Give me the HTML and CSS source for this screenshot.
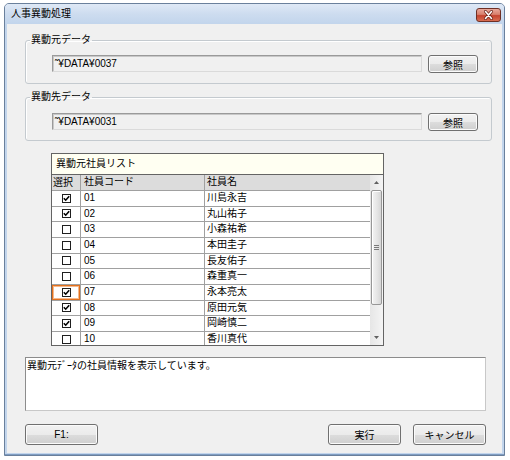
FILE: index.html
```html
<!DOCTYPE html>
<html lang="ja">
<head>
<meta charset="utf-8">
<title>人事異動処理</title>
<link rel="stylesheet" href="styles.css">
</head>
<body>
<div class="window">
  <div class="titlebar">
    <span class="title">人事異動処理</span>
    <span class="close"><svg width="23" height="12" viewBox="0 0 23 12"><path d="M8.5 2.5 L14.5 9.5 M14.5 2.5 L8.5 9.5" stroke="#6b2418" stroke-width="3" stroke-linecap="round"/><path d="M8.5 2.5 L14.5 9.5 M14.5 2.5 L8.5 9.5" stroke="#ffffff" stroke-width="1.6" stroke-linecap="round"/></svg></span>
  </div>
  <div class="client">
    <fieldset class="group g1">
      <legend>異動元データ</legend>
      <div class="path-row">
        <div class="path">˜¥DATA¥0037</div>
        <button class="btn ref">参照</button>
      </div>
    </fieldset>
    <fieldset class="group g2">
      <legend>異動先データ</legend>
      <div class="path-row">
        <div class="path">˜¥DATA¥0031</div>
        <button class="btn ref">参照</button>
      </div>
    </fieldset>

    <div class="list">
      <div class="list-title">異動元社員リスト</div>
      <div class="list-body">
        <div class="grid">
          <div class="row head"><div class="c1">選択</div><div class="c2">社員コード</div><div class="c3">社員名</div></div>
          <div class="row"><div class="c1"><span class="cb on"><svg width="7" height="7" viewBox="0 0 7 7"><path d="M0.8 3.3 L2.7 5.2 L6.2 1.2" fill="none" stroke="#000" stroke-width="1.6"/></svg></span></div><div class="c2">01</div><div class="c3">川島永吉</div></div>
          <div class="row"><div class="c1"><span class="cb on"><svg width="7" height="7" viewBox="0 0 7 7"><path d="M0.8 3.3 L2.7 5.2 L6.2 1.2" fill="none" stroke="#000" stroke-width="1.6"/></svg></span></div><div class="c2">02</div><div class="c3">丸山祐子</div></div>
          <div class="row"><div class="c1"><span class="cb"></span></div><div class="c2">03</div><div class="c3">小森祐希</div></div>
          <div class="row"><div class="c1"><span class="cb"></span></div><div class="c2">04</div><div class="c3">本田圭子</div></div>
          <div class="row"><div class="c1"><span class="cb"></span></div><div class="c2">05</div><div class="c3">長友佑子</div></div>
          <div class="row"><div class="c1"><span class="cb"></span></div><div class="c2">06</div><div class="c3">森重真一</div></div>
          <div class="row"><div class="c1 focus"><span class="cb on"><svg width="7" height="7" viewBox="0 0 7 7"><path d="M0.8 3.3 L2.7 5.2 L6.2 1.2" fill="none" stroke="#000" stroke-width="1.6"/></svg></span></div><div class="c2">07</div><div class="c3">永本亮太</div></div>
          <div class="row"><div class="c1"><span class="cb on"><svg width="7" height="7" viewBox="0 0 7 7"><path d="M0.8 3.3 L2.7 5.2 L6.2 1.2" fill="none" stroke="#000" stroke-width="1.6"/></svg></span></div><div class="c2">08</div><div class="c3">原田元気</div></div>
          <div class="row"><div class="c1"><span class="cb on"><svg width="7" height="7" viewBox="0 0 7 7"><path d="M0.8 3.3 L2.7 5.2 L6.2 1.2" fill="none" stroke="#000" stroke-width="1.6"/></svg></span></div><div class="c2">09</div><div class="c3">岡崎慎二</div></div>
          <div class="row"><div class="c1"><span class="cb"></span></div><div class="c2">10</div><div class="c3">香川真代</div></div>
        </div>
        <div class="scrollbar">
          <div class="arrow"><svg width="5" height="3" viewBox="0 0 5 3"><path d="M0 3 L2.5 0 L5 3 Z" fill="#606060"/></svg></div>
          <div class="thumb"><span class="grip"></span><span class="grip"></span><span class="grip"></span></div>
          <div class="track"></div>
          <div class="arrow"><svg width="5" height="3" viewBox="0 0 5 3"><path d="M0 0 L5 0 L2.5 3 Z" fill="#606060"/></svg></div>
        </div>
      </div>
    </div>

    <div class="desc">異動元ﾃﾞｰﾀの社員情報を表示しています。</div>

    <div class="buttons">
      <button class="btn wide">F1:</button>
      <span class="spacer"></span>
      <button class="btn wide">実行</button>
      <button class="btn wide">キャンセル</button>
    </div>
  </div>
</div>
</body>
</html>
```

FILE: styles.css
```css
* { box-sizing: border-box; }
html, body { margin: 0; padding: 0; background: #ffffff; }
body {
  font-family: "Liberation Sans", "Noto Sans CJK JP", sans-serif;
  font-size: 10px;
  color: #000;
}

.window {
  margin: 3px 0 0 4px;
  width: 501px;
  height: 453px;
  border: 1px solid #6a809c;
  border-radius: 5px 5px 0 0;
  background: #c2d5ec;
  padding: 0 2px 2px 2px;
  display: flex;
  flex-direction: column;
  box-shadow: inset 0 -1px 0 #7f9dc2;
}

.titlebar {
  height: 20px;
  margin: 0 -2px;
  padding: 0 3px 0 6px;
  display: flex;
  justify-content: space-between;
  align-items: flex-start;
  background: linear-gradient(to bottom, #dfe9f6 0%, #cddcef 50%, #c2d5ec 100%);
  border-radius: 4px 4px 0 0;
}
.title { line-height: 20px; font-size: 10px; }
.close {
  margin-top: 4px;
  width: 25px;
  height: 14px;
  border: 1px solid #6e3025;
  border-radius: 3px;
  background: linear-gradient(to bottom, #e9a99b 0%, #d8806d 45%, #c4442f 55%, #d86d52 100%);
  display: flex;
  align-items: center;
  justify-content: center;
}
.close svg { display: block; }

.client {
  flex: 1;
  background: #f0f0f0;
  padding-left: 18px;
  display: flex;
  flex-direction: column;
  align-items: flex-start;
}

.group {
  margin: 0;
  width: 467px;
  min-width: 0;
  border: 1px solid #c4cacf;
  border-radius: 3px;
  box-shadow: inset 1px 1px 0 #ffffff;
  padding: 8px 13px 10px 26px;
}
.g1 { margin-top: 9px; }
.g2 { margin-top: 6px; padding-top: 9px; padding-bottom: 9px; }
.group legend {
  margin-left: -22px;
  padding: 0 1px;
  line-height: 14px;
  font-size: 10px;
}

.path-row {
  display: flex;
  align-items: flex-start;
  gap: 6px;
}
.path {
  width: 370px;
  height: 17px;
  border: 1px solid;
  border-color: #9a9a9a #dadada #dadada #9a9a9a;
  box-shadow: inset 1px 1px 0 #c8c8c8;
  padding-left: 2px;
  line-height: 15px;
  background: #f0f0f0;
  white-space: nowrap;
}

.btn {
  font-family: inherit;
  font-size: 10px;
  color: #000;
  padding: 0;
  border: 1px solid #707070;
  border-radius: 3px;
  background: linear-gradient(to bottom, #f2f2f2 0%, #ebebeb 50%, #dddddd 50%, #cfcfcf 100%);
  box-shadow: inset 0 0 0 1px #fbfbfb;
  display: flex;
  align-items: center;
  justify-content: center;
}
.ref { width: 50px; height: 18px; }
.wide { width: 73px; height: 21px; }

.list {
  margin: 12px 0 0 26px;
  width: 333px;
  height: 193px;
  border: 1px solid #646464;
  display: flex;
  flex-direction: column;
  overflow: hidden;
}
.list-title {
  height: 21px;
  flex: none;
  background: #fffff2;
  border-bottom: 1px solid #646464;
  padding-left: 4px;
  line-height: 20px;
}
.list-body {
  flex: 1;
  display: flex;
  min-height: 0;
}
.grid {
  width: 318px;
  overflow: hidden;
  background: #ffffff;
}
.row {
  display: flex;
  height: 15.67px;
  border-bottom: 1px solid #a0a0a0;
  line-height: 14px;
}
.row.head {
  height: 16px;
  background: #dcdcdc;
}
.c1 {
  width: 29px;
  flex: none;
  border-right: 1px solid #a0a0a0;
  display: flex;
  align-items: center;
  justify-content: center;
  padding-left: 1px;
}
.head .c1 { justify-content: flex-start; padding-left: 1px; }
.c2 {
  width: 124px;
  flex: none;
  border-right: 1px solid #a0a0a0;
  padding-left: 3px;
}
.c3 {
  flex: 1;
  padding-left: 2px;
}
.focus { box-shadow: inset 0 0 0 1px #e2711f, inset 0 0 0 2px #f6b98c; }

.cb {
  width: 9px;
  height: 9px;
  border: 1px solid #1f1f1f;
  background: #fff;
  display: flex;
  align-items: center;
  justify-content: center;
}
.cb svg { display: block; }

.scrollbar {
  width: 13px;
  flex: none;
  background: linear-gradient(to right, #e6e6e6, #f4f4f4);
  display: flex;
  flex-direction: column;
  align-items: center;
}
.arrow {
  height: 15px;
  width: 13px;
  flex: none;
  display: flex;
  align-items: center;
  justify-content: center;
}
.thumb {
  width: 11px;
  height: 115px;
  flex: none;
  border: 1px solid #979797;
  border-radius: 2px;
  background: linear-gradient(to right, #f4f4f4, #e4e4e4 60%, #d6d6d6);
  box-shadow: inset 1px 1px 0 #ffffff;
  display: flex;
  flex-direction: column;
  align-items: center;
  justify-content: center;
  gap: 1px;
}
.grip { width: 5px; height: 1px; background: #7a7a7a; }
.track { flex: 1; }

.desc {
  margin-top: 11px;
  width: 461px;
  height: 54px;
  background: #ffffff;
  border: 1px solid;
  border-color: #8c8c8c #c8c8c8 #c8c8c8 #8c8c8c;
  padding: 2px 1px;
  line-height: 12px;
}

.buttons {
  margin-top: 13px;
  width: 461px;
  display: flex;
  gap: 12px;
}
.spacer { flex: 1; }
```
